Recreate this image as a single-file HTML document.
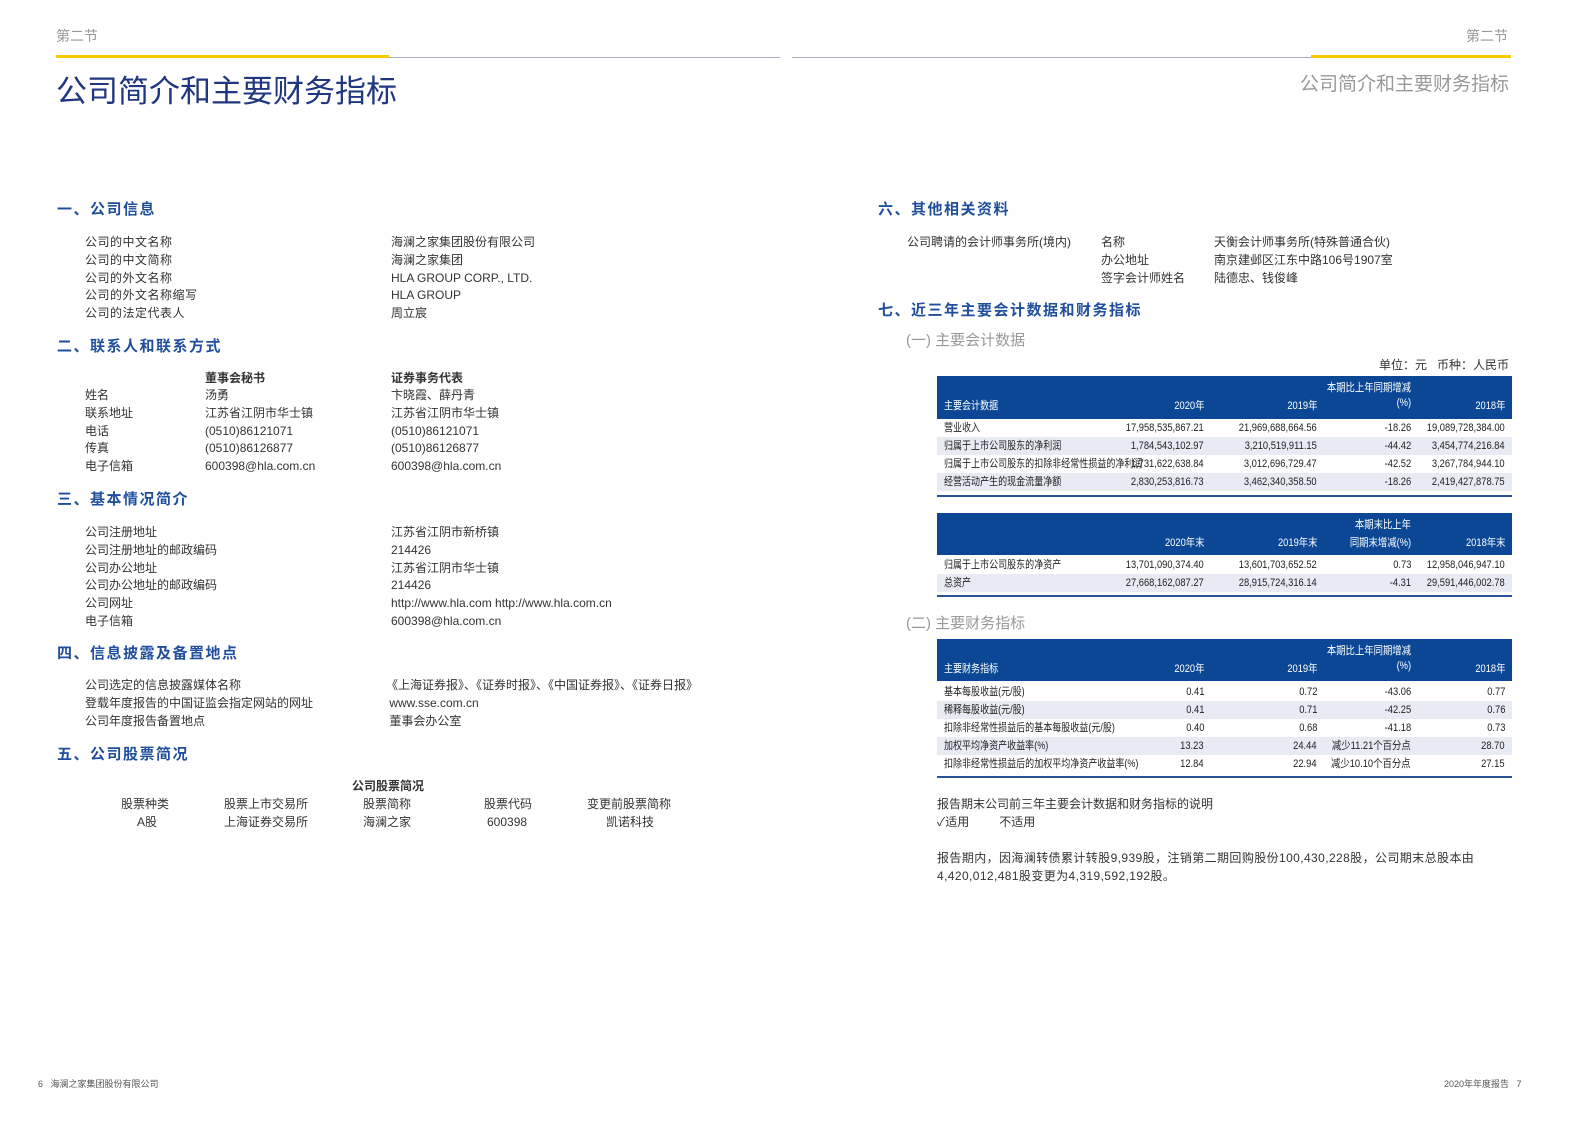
<!DOCTYPE html>
<html><head><meta charset="utf-8"><style>
body{margin:0;width:1587px;height:1122px;background:#fff;position:relative;overflow:hidden;font-family:"Liberation Sans","Noto Sans CJK SC",sans-serif;color:#333;}
.a{position:absolute;white-space:nowrap;font-size:12px;line-height:16px;}
.h{position:absolute;white-space:nowrap;font-size:15px;font-weight:bold;color:#1f4e9c;letter-spacing:1.5px;line-height:20px;}
.s{position:absolute;white-space:nowrap;font-size:15px;color:#999;line-height:20px;}
.tb{position:absolute;left:937px;width:575px;font-size:11px;color:#222;}
.hd{background:#0b4795;color:#fff;position:relative;}
.row{position:relative;height:18px;line-height:18px;}
.row.alt{background:#e8eaf4;}
.c{position:absolute;white-space:nowrap;transform:scaleX(.85);transform-origin:right center;}
.c.l{transform:scaleX(.82);transform-origin:left center;}
.bl{border-bottom:2px solid #2a5298;}
</style></head><body>
<div class="a" style="left:56px;top:28px;font-size:14px;color:#999;">第二节</div>
<div style="position:absolute;left:56px;top:55px;width:333px;height:3px;background:#f7cb00"></div>
<div style="position:absolute;left:389px;top:57px;width:391px;height:1px;background:#aab"></div>
<div class="a" style="left:56px;top:72px;font-size:31px;line-height:40px;color:#1f3680;">公司简介和主要财务指标</div>
<div class="a" style="left:1466px;top:28px;font-size:14px;color:#999;">第二节</div>
<div style="position:absolute;left:792px;top:57px;width:520px;height:1px;background:#aab"></div>
<div style="position:absolute;left:1311px;top:55px;width:200px;height:3px;background:#f7cb00"></div>
<div class="a" style="left:1300px;top:72px;font-size:19px;line-height:26px;color:#999;">公司简介和主要财务指标</div>

<div class="h" style="left:57px;top:200px;">一、公司信息</div>
<div class="a" style="left:85px;top:234px;line-height:17.8px;letter-spacing:.5px">公司的中文名称<br>公司的中文简称<br>公司的外文名称<br>公司的外文名称缩写<br>公司的法定代表人</div>
<div class="a" style="left:391px;top:234px;line-height:17.8px;">海澜之家集团股份有限公司<br>海澜之家集团<br>HLA GROUP CORP., LTD.<br>HLA GROUP<br>周立宸</div>
<div class="h" style="left:57px;top:337px;">二、联系人和联系方式</div>
<div class="a" style="left:205px;top:370px;font-weight:bold;">董事会秘书</div>
<div class="a" style="left:391px;top:370px;font-weight:bold;">证券事务代表</div>
<div class="a" style="left:85px;top:387px;line-height:17.8px;">姓名<br>联系地址<br>电话<br>传真<br>电子信箱</div>
<div class="a" style="left:205px;top:387px;line-height:17.8px;">汤勇<br>江苏省江阴市华士镇<br>(0510)86121071<br>(0510)86126877<br>600398@hla.com.cn</div>
<div class="a" style="left:391px;top:387px;line-height:17.8px;">卞晓霞、薛丹青<br>江苏省江阴市华士镇<br>(0510)86121071<br>(0510)86126877<br>600398@hla.com.cn</div>
<div class="h" style="left:57px;top:490px;">三、基本情况简介</div>
<div class="a" style="left:85px;top:524px;line-height:17.8px;">公司注册地址<br>公司注册地址的邮政编码<br>公司办公地址<br>公司办公地址的邮政编码<br>公司网址<br>电子信箱</div>
<div class="a" style="left:391px;top:524px;line-height:17.8px;">江苏省江阴市新桥镇<br>214426<br>江苏省江阴市华士镇<br>214426<br>http://www.hla.com http://www.hla.com.cn<br>600398@hla.com.cn</div>
<div class="h" style="left:57px;top:644px;">四、信息披露及备置地点</div>
<div class="a" style="left:85px;top:677px;line-height:17.8px;">公司选定的信息披露媒体名称<br>登载年度报告的中国证监会指定网站的网址<br>公司年度报告备置地点</div>
<div class="a" style="left:386px;top:677px;line-height:17.8px;">《上海证券报》、《证券时报》、《中国证券报》、《证券日报》<br>&nbsp;www.sse.com.cn<br>&nbsp;董事会办公室</div>
<div class="h" style="left:57px;top:745px;">五、公司股票简况</div>
<div class="a" style="left:352px;top:778px;font-weight:bold;">公司股票简况</div>
<div class="a" style="left:121px;top:796px;">股票种类</div><div class="a" style="left:137px;top:814px;">A股</div>
<div class="a" style="left:224px;top:796px;">股票上市交易所</div><div class="a" style="left:224px;top:814px;">上海证券交易所</div>
<div class="a" style="left:363px;top:796px;">股票简称</div><div class="a" style="left:363px;top:814px;">海澜之家</div>
<div class="a" style="left:484px;top:796px;">股票代码</div><div class="a" style="left:487px;top:814px;">600398</div>
<div class="a" style="left:587px;top:796px;">变更前股票简称</div><div class="a" style="left:606px;top:814px;">凯诺科技</div>
<div class="a" style="left:38px;top:1076px;font-size:9px;color:#555">6 &nbsp; 海澜之家集团股份有限公司</div>
<div class="a" style="left:1444px;top:1076px;font-size:9px;color:#555">2020年年度报告 &nbsp; 7</div>

<div class="h" style="left:878px;top:200px;">六、其他相关资料</div>
<div class="a" style="left:907px;top:234px;">公司聘请的会计师事务所(境内)</div>
<div class="a" style="left:1101px;top:234px;line-height:17.8px;">名称<br>办公地址<br>签字会计师姓名</div>
<div class="a" style="left:1214px;top:234px;line-height:17.8px;">天衡会计师事务所(特殊普通合伙)<br>南京建邺区江东中路106号1907室<br>陆德忠、钱俊峰</div>
<div class="h" style="left:878px;top:301px;">七、近三年主要会计数据和财务指标</div>
<div class="s" style="left:906px;top:331px;">(一) 主要会计数据</div>
<div class="a" style="left:1379px;top:357px;">单位：元 &nbsp; 币种：人民币</div>

<div class="tb" style="top:376px;">
 <div class="hd" style="height:43px;"><span class="c l" style="left:7px;top:21px">主要会计数据</span><span class="c" style="right:308px;top:21px">2020年</span><span class="c" style="right:195px;top:21px">2019年</span><span class="c" style="right:101px;top:3px">本期比上年同期增减</span><span class="c" style="right:101px;top:21px">(%)</span><span class="c" style="right:7px;top:21px">2018年</span></div>
 <div class="bl">
 <div class="row"><span class="c l" style="left:7px">营业收入</span><span class="c" style="right:308px">17,958,535,867.21</span><span class="c" style="right:195px">21,969,688,664.56</span><span class="c" style="right:101px">-18.26</span><span class="c" style="right:7px">19,089,728,384.00</span></div>
 <div class="row alt"><span class="c l" style="left:7px">归属于上市公司股东的净利润</span><span class="c" style="right:308px">1,784,543,102.97</span><span class="c" style="right:195px">3,210,519,911.15</span><span class="c" style="right:101px">-44.42</span><span class="c" style="right:7px">3,454,774,216.84</span></div>
 <div class="row"><span class="c l" style="left:7px">归属于上市公司股东的扣除非经常性损益的净利润</span><span class="c" style="right:308px">1,731,622,638.84</span><span class="c" style="right:195px">3,012,696,729.47</span><span class="c" style="right:101px">-42.52</span><span class="c" style="right:7px">3,267,784,944.10</span></div>
 <div class="row alt"><span class="c l" style="left:7px">经营活动产生的现金流量净额</span><span class="c" style="right:308px">2,830,253,816.73</span><span class="c" style="right:195px">3,462,340,358.50</span><span class="c" style="right:101px">-18.26</span><span class="c" style="right:7px">2,419,427,878.75</span></div>
 <div style="height:4px"></div></div>
</div>

<div class="tb" style="top:513px;">
 <div class="hd" style="height:42px;"><span class="c" style="right:308px;top:21px">2020年末</span><span class="c" style="right:195px;top:21px">2019年末</span><span class="c" style="right:101px;top:3px">本期末比上年</span><span class="c" style="right:101px;top:21px">同期末增减(%)</span><span class="c" style="right:7px;top:21px">2018年末</span></div>
 <div class="bl" style="padding-top:1px">
 <div class="row"><span class="c l" style="left:7px">归属于上市公司股东的净资产</span><span class="c" style="right:308px">13,701,090,374.40</span><span class="c" style="right:195px">13,601,703,652.52</span><span class="c" style="right:101px">0.73</span><span class="c" style="right:7px">12,958,046,947.10</span></div>
 <div class="row alt"><span class="c l" style="left:7px">总资产</span><span class="c" style="right:308px">27,668,162,087.27</span><span class="c" style="right:195px">28,915,724,316.14</span><span class="c" style="right:101px">-4.31</span><span class="c" style="right:7px">29,591,446,002.78</span></div>
 <div style="height:3px"></div></div>
</div>

<div class="s" style="left:906px;top:614px;">(二) 主要财务指标</div>
<div class="tb" style="top:639px;">
 <div class="hd" style="height:42px;"><span class="c l" style="left:7px;top:21px">主要财务指标</span><span class="c" style="right:308px;top:21px">2020年</span><span class="c" style="right:195px;top:21px">2019年</span><span class="c" style="right:101px;top:3px">本期比上年同期增减</span><span class="c" style="right:101px;top:21px">(%)</span><span class="c" style="right:7px;top:21px">2018年</span></div>
 <div class="bl" style="padding-top:2px">
 <div class="row"><span class="c l" style="left:7px">基本每股收益(元/股)</span><span class="c" style="right:308px">0.41</span><span class="c" style="right:195px">0.72</span><span class="c" style="right:101px">-43.06</span><span class="c" style="right:7px">0.77</span></div>
 <div class="row alt"><span class="c l" style="left:7px">稀释每股收益(元/股)</span><span class="c" style="right:308px">0.41</span><span class="c" style="right:195px">0.71</span><span class="c" style="right:101px">-42.25</span><span class="c" style="right:7px">0.76</span></div>
 <div class="row"><span class="c l" style="left:7px">扣除非经常性损益后的基本每股收益(元/股)</span><span class="c" style="right:308px">0.40</span><span class="c" style="right:195px">0.68</span><span class="c" style="right:101px">-41.18</span><span class="c" style="right:7px">0.73</span></div>
 <div class="row alt"><span class="c l" style="left:7px">加权平均净资产收益率(%)</span><span class="c" style="right:308px">13.23</span><span class="c" style="right:195px">24.44</span><span class="c" style="right:101px">减少11.21个百分点</span><span class="c" style="right:7px">28.70</span></div>
 <div class="row"><span class="c l" style="left:7px">扣除非经常性损益后的加权平均净资产收益率(%)</span><span class="c" style="right:308px">12.84</span><span class="c" style="right:195px">22.94</span><span class="c" style="right:101px">减少10.10个百分点</span><span class="c" style="right:7px">27.15</span></div>
 <div style="height:3px"></div></div>
</div>

<div class="a" style="left:937px;top:796px;">报告期末公司前三年主要会计数据和财务指标的说明</div>
<div class="a" style="left:937px;top:814px;">✓适用 &nbsp; &nbsp; &nbsp; &nbsp; 不适用</div>
<div class="a" style="left:937px;top:849px;line-height:18px;letter-spacing:.4px;">报告期内，因海澜转债累计转股9,939股，注销第二期回购股份100,430,228股，公司期末总股本由<br>4,420,012,481股变更为4,319,592,192股。</div>
</body></html>
